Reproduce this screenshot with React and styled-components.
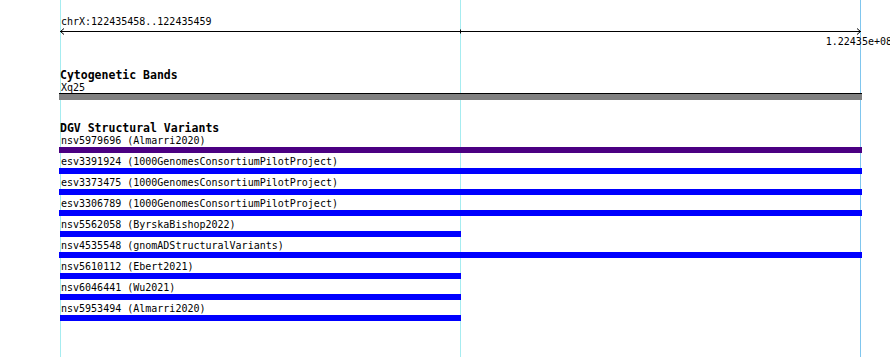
import React from 'react';
import styled, { createGlobalStyle } from 'styled-components';

const GlobalStyle = createGlobalStyle`
    body {
        margin: 0;
        background: #ffffff;
        font-family: "DejaVu Sans Mono", "Liberation Mono", monospace;
        color: #000;
    }
`;

const Canvas = styled.div`
    position: relative;
    width: 890px;
    height: 357px;
    overflow: hidden;
`;

const GridLine = styled.div`
    position: absolute;
    top: 0;
    bottom: 0;
    left: ${props => props.x}px;
    width: 1px;
    background: ${props => props.color};
    z-index: 0;
`;

const Content = styled.div`
    position: relative;
    z-index: 1;
    width: 803px;
    margin-left: 59px;
    display: flex;
    flex-direction: column;
`;

const Label = styled.div`
    font-size: 10px;
    line-height: 11px;
    height: 11px;
    padding-left: ${props => props.indent ?? 2}px;
    white-space: nowrap;
`;

const RulerSection = styled.div`
    margin-top: 16px;
    display: flex;
    flex-direction: column;
`;

const TickRow = styled.div`
    display: flex;
    justify-content: flex-end;
    margin-right: -30px;
`;

const Track = styled.div`
    display: flex;
    flex-direction: column;
    margin-top: ${props => props.top}px;
`;

const TrackTitle = styled.div`
    font-size: 11.5px;
    font-weight: bold;
    line-height: 13px;
    height: 13px;
    padding-left: 1px;
    white-space: nowrap;
`;

const BandBar = styled.div`
    height: 6px;
    border-top: 1px solid #000;
    background: #808080;
`;

const Feature = styled.div`
    display: flex;
    flex-direction: column;
    padding-bottom: 3px;
`;

const FeatureBar = styled.div`
    height: 6px;
    margin-top: 1px;
    margin-left: ${props => (props.short ? 1 : 0)}px;
    width: ${props => (props.short ? '401px' : '803px')};
    background: ${props => props.color};
`;

const variants = [
    { name: 'nsv5979696 (Almarri2020)', color: '#4b0082' },
    { name: 'esv3391924 (1000GenomesConsortiumPilotProject)', color: '#0000ff' },
    { name: 'esv3373475 (1000GenomesConsortiumPilotProject)', color: '#0000ff' },
    { name: 'esv3306789 (1000GenomesConsortiumPilotProject)', color: '#0000ff' },
    { name: 'nsv5562058 (ByrskaBishop2022)', color: '#0000ff', short: true },
    { name: 'nsv4535548 (gnomADStructuralVariants)', color: '#0000ff' },
    { name: 'nsv5610112 (Ebert2021)', color: '#0000ff', short: true },
    { name: 'nsv6046441 (Wu2021)', color: '#0000ff', short: true },
    { name: 'nsv5953494 (Almarri2020)', color: '#0000ff', short: true },
];

function Ruler() {
    return (
        <svg width="803" height="9" style={{ display: 'block' }}>
            <g stroke="#000" strokeWidth="1" fill="none">
                <line x1="1" y1="4.5" x2="802" y2="4.5" />
                <line x1="401.5" y1="2.5" x2="401.5" y2="6.5" />
                <polyline points="5,1.5 1.5,4.5 5,7.5" />
                <polyline points="798,1.5 801.5,4.5 798,7.5" />
            </g>
        </svg>
    );
}

export default function App() {
    return (
        <Canvas>
            <GlobalStyle />
            <GridLine x={60} color="#a6ecf0" />
            <GridLine x={460} color="#a6ecf0" />
            <GridLine x={860} color="#80c6ee" />
            <Content>
                <RulerSection>
                    <Label>chrX:122435458..122435459</Label>
                    <Ruler />
                    <TickRow>
                        <Label indent={0}>1.22435e+08</Label>
                    </TickRow>
                </RulerSection>
                <Track top={22}>
                    <TrackTitle>Cytogenetic Bands</TrackTitle>
                    <Label>Xq25</Label>
                    <BandBar />
                </Track>
                <Track top={22}>
                    <TrackTitle>DGV Structural Variants</TrackTitle>
                    {variants.map(v => (
                        <Feature key={v.name}>
                            <Label>{v.name}</Label>
                            <FeatureBar color={v.color} short={v.short} />
                        </Feature>
                    ))}
                </Track>
            </Content>
        </Canvas>
    );
}
